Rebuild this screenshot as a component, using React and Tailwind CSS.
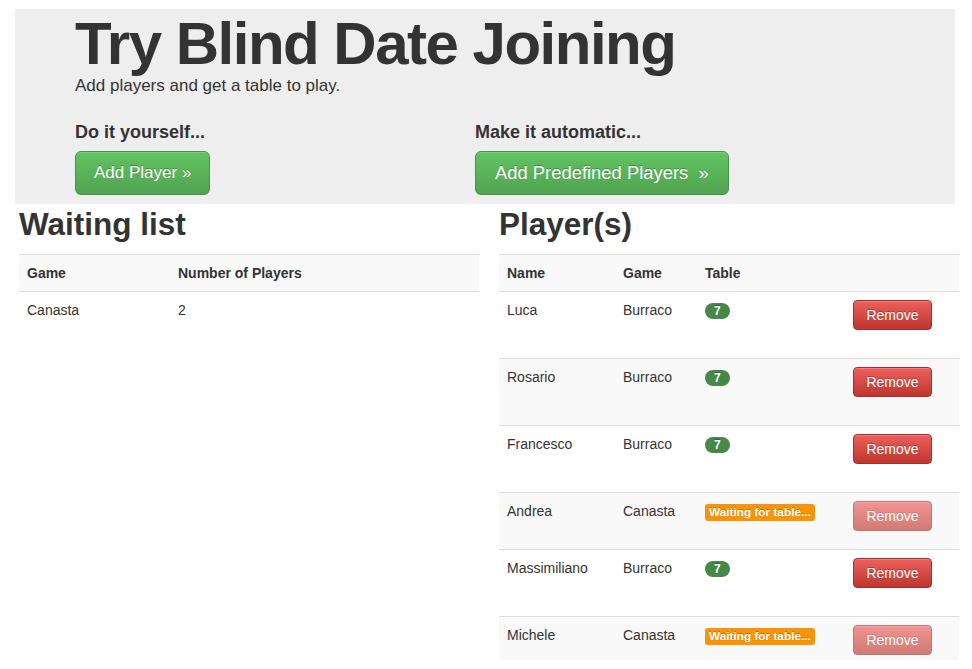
import React from "react";

const players = [
  { name: "Luca", game: "Burraco", table: 7 },
  { name: "Rosario", game: "Burraco", table: 7 },
  { name: "Francesco", game: "Burraco", table: 7 },
  { name: "Andrea", game: "Canasta", table: null },
  { name: "Massimiliano", game: "Burraco", table: 7 },
  { name: "Michele", game: "Canasta", table: null, last: true },
];

function RemoveButton({ disabled }) {
  return (
    <button
      className={`h-[30px] w-[79px] rounded-[4px] border border-[#a3302a] bg-gradient-to-b from-[#ee5f5b] to-[#bd362f] text-[14px] leading-[20px] text-white [text-shadow:0_-1px_0_rgba(0,0,0,0.25)] shadow-[inset_0_1px_0_rgba(255,255,255,0.2)] ${
        disabled ? "opacity-65" : ""
      }`}
    >
      Remove
    </button>
  );
}

function TableCell({ table }) {
  if (table) {
    return (
      <span className="mt-[2px] inline-block h-[16px] rounded-[9px] bg-[#468847] px-[9px] text-[12px] font-bold leading-[16px] text-white [text-shadow:0_-1px_0_rgba(0,0,0,0.25)]">
        {table}
      </span>
    );
  }
  return (
    <span className="mt-[2px] inline-block h-[17px] rounded-[3px] bg-[#f89406] px-[4px] text-[11.8px] font-bold leading-[17px] text-white [text-shadow:0_-1px_0_rgba(0,0,0,0.25)]">
      Waiting for table...
    </span>
  );
}

export default function App() {
  return (
    <div
      className="min-h-screen bg-white pt-[9px] text-[14px] leading-[20px] text-[#333]"
      style={{ fontFamily: '"Liberation Sans", Arial, Helvetica, sans-serif' }}
    >
      {/* hero */}
      <div className="ml-[15px] w-[940px] bg-[#eeeeee] pb-[9px] pl-[60px] pt-[5px]">
        <h1 className="text-[60px] font-bold leading-[60px] tracking-[-1.5px]">Try Blind Date Joining</h1>
        <p className="mt-[2px] text-[17px] leading-[20px]">Add players and get a table to play.</p>
        <div className="mt-[26px] flex">
          <div className="w-[400px]">
            <h4 className="text-[18px] font-bold leading-[20px]">Do it yourself...</h4>
            <button className="mt-[9px] h-[44px] rounded-[6px] border border-[#44944a] bg-gradient-to-b from-[#62c462] to-[#51a351] px-[18px] text-[17px] leading-[20px] text-white [text-shadow:0_-1px_0_rgba(0,0,0,0.25)] shadow-[inset_0_1px_0_rgba(255,255,255,0.2)]">
              Add Player »
            </button>
          </div>
          <div className="w-[400px]">
            <h4 className="text-[18px] font-bold leading-[20px]">Make it automatic...</h4>
            <button className="mt-[9px] h-[44px] rounded-[6px] border border-[#44944a] bg-gradient-to-b from-[#62c462] to-[#51a351] px-[19px] text-[18.4px] leading-[20px] text-white [text-shadow:0_-1px_0_rgba(0,0,0,0.25)] shadow-[inset_0_1px_0_rgba(255,255,255,0.2)]">
              Add Predefined Players&nbsp; »
            </button>
          </div>
        </div>
      </div>

      <div className="flex gap-[20px] pl-[19px]">
        {/* waiting list */}
        <div className="w-[460px]">
          <h2 className="text-[31.5px] font-bold leading-[40px]">Waiting list</h2>
          <div className="mt-[10px]">
            <div className="flex h-[37px] border-t border-[#ddd] bg-[#f9f9f9] font-bold">
              <div className="w-[151px] px-[8px] pt-[8px]">Game</div>
              <div className="flex-1 px-[8px] pt-[8px]">Number of Players</div>
            </div>
            <div className="flex h-[37px] border-t border-[#ddd]">
              <div className="w-[151px] px-[8px] pt-[8px]">Canasta</div>
              <div className="flex-1 px-[8px] pt-[8px]">2</div>
            </div>
          </div>
        </div>

        {/* players */}
        <div className="w-[460px]">
          <h2 className="text-[31.5px] font-bold leading-[40px]">Player(s)</h2>
          <div className="mt-[10px]">
            <div className="flex h-[37px] border-t border-[#ddd] bg-[#f9f9f9] font-bold">
              <div className="w-[116px] px-[8px] pt-[8px]">Name</div>
              <div className="w-[82px] px-[8px] pt-[8px]">Game</div>
              <div className="w-[148px] px-[8px] pt-[8px]">Table</div>
              <div className="flex-1"></div>
            </div>
            {players.map((p, i) => (
              <div
                key={p.name}
                className={`flex border-t border-[#ddd] ${i % 2 === 1 ? "bg-[#f9f9f9]" : "bg-white"} ${
                  p.last ? "h-[44px]" : p.table ? "h-[67px]" : "h-[57px]"
                }`}
              >
                <div className="w-[116px] px-[8px] pt-[8px]">{p.name}</div>
                <div className="w-[82px] px-[8px] pt-[8px]">{p.game}</div>
                <div className="w-[148px] px-[8px] pt-[8px]">
                  <TableCell table={p.table} />
                </div>
                <div className="flex-1 px-[8px] pt-[8px]">
                  <RemoveButton disabled={!p.table} />
                </div>
              </div>
            ))}
          </div>
        </div>
      </div>
    </div>
  );
}
